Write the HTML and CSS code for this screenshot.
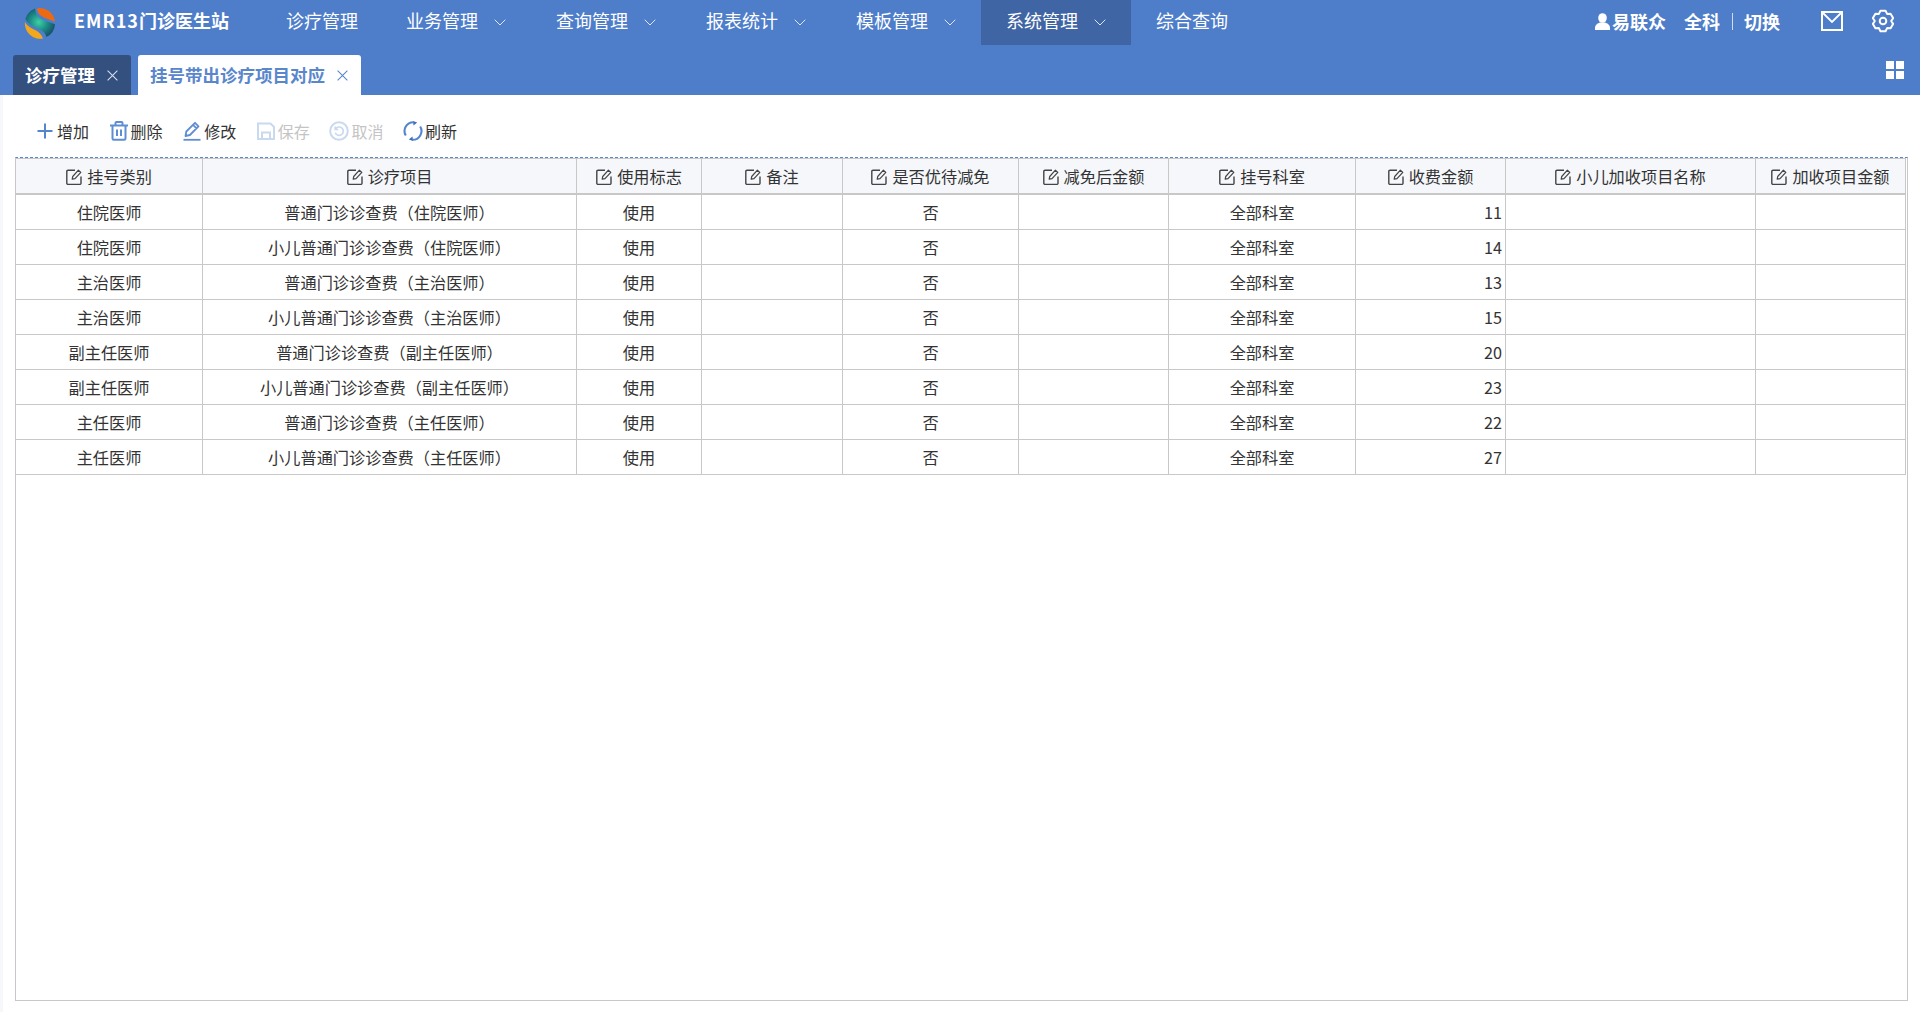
FILE: index.html
```html
<!DOCTYPE html>
<html lang="zh-CN">
<head>
<meta charset="utf-8">
<title>挂号带出诊疗项目对应</title>
<link rel="stylesheet" href="styles.css">
</head>
<body>
<svg class="sprites" width="0" height="0" aria-hidden="true">
  <symbol id="edit" viewBox="0 0 16 16">
    <path d="M9 1.200H2a1.200 1.200 0 0 0-1.200 1.200v11.800A1.200 1.200 0 0 0 2 15.400h11.800a1.200 1.200 0 0 0 1.200-1.200V7.500" fill="none" stroke="currentColor" stroke-width="1.400"/>
    <path d="M6.200 10.200l.5-2.700L12.400 1.200l2.400 2.200-5.800 6.300z" fill="none" stroke="currentColor" stroke-width="1.200" stroke-linejoin="round"/>
  </symbol>
  <symbol id="chev" viewBox="0 0 12 7">
    <path d="M.7.7L6 6l5.300-5.300" fill="none" stroke="currentColor" stroke-width="1"/>
  </symbol>
  <symbol id="close" viewBox="0 0 11 11">
    <path d="M.6.6l9.800 9.800M10.400.6L.6 10.400" fill="none" stroke="currentColor" stroke-width="1.100"/>
  </symbol>
</svg>

<header class="topbar">
  <div class="navrow">
    <svg class="logo" viewBox="0 0 32 32" aria-hidden="true">
      <defs>
        <radialGradient id="teal" cx="45%" cy="48%" r="55%">
          <stop offset="0" stop-color="#3ed0a4"/>
          <stop offset=".55" stop-color="#1c8b86"/>
          <stop offset="1" stop-color="#16566b"/>
        </radialGradient>
      </defs>
      <path d="M13 1.400A15 15 0 0 1 31 14.600C27 12.600 21 12 16 8 14.500 6.500 13.500 4.200 13 1.400Z" fill="#ee6a12"/>
      <path d="M.9 15C3 19 7 21 11 23c4 2 6.500 4.500 8 8.600A15.500 15.500 0 0 1 .9 15Z" fill="#f3a81c"/>
      <path d="M11 1.600A15.500 15.500 0 0 0 1.400 12C4 17 9 19 13 21c5 2 8 4 9.500 9A15.500 15.500 0 0 0 31 17.200C26 15 19 14.500 14 9.500 12.500 8 11.500 5 11 1.600Z" fill="url(#teal)"/>
    </svg>
    <div class="brand"><span class="brand-code">EMR13</span>门诊医生站</div>
    <nav class="menu">
      <a class="menu-item">诊疗管理</a>
      <a class="menu-item">业务管理<svg class="chev"><use href="#chev"/></svg></a>
      <a class="menu-item">查询管理<svg class="chev"><use href="#chev"/></svg></a>
      <a class="menu-item">报表统计<svg class="chev"><use href="#chev"/></svg></a>
      <a class="menu-item">模板管理<svg class="chev"><use href="#chev"/></svg></a>
      <a class="menu-item active">系统管理<svg class="chev"><use href="#chev"/></svg></a>
      <a class="menu-item">综合查询</a>
    </nav>
    <div class="user">
      <svg class="person" viewBox="0 0 15 17" aria-hidden="true">
        <ellipse cx="7.500" cy="5" rx="4.300" ry="4.800" fill="#fff"/>
        <path d="M0 17v-2.200C0 11.800 3 10.200 5 9.600h5c2 .6 5 2.200 5 5.200V17z" fill="#fff"/>
      </svg>
      <span class="user-name">易联众</span>
      <span class="user-dept">全科</span>
      <span class="user-sep"></span>
      <span class="user-switch">切换</span>
      <svg class="mail" viewBox="0 0 22 20" aria-hidden="true">
        <rect x="1" y="1" width="20" height="18" fill="none" stroke="#fff" stroke-width="2"/>
        <path d="M2 2l9 9 9-9" fill="none" stroke="#fff" stroke-width="1.800"/>
      </svg>
      <svg class="gear" viewBox="0 0 24 24" aria-hidden="true">
        <polygon points="14.54,1.81 9.46,1.81 7.9,4.9 4.45,4.71 1.91,9.11 3.8,12 1.91,14.89 4.45,19.29 7.9,19.1 9.46,22.19 14.54,22.19 16.1,19.1 19.55,19.29 22.09,14.89 20.2,12 22.09,9.11 19.55,4.71 16.1,4.9" fill="none" stroke="#fff" stroke-width="2" stroke-linejoin="round"/>
        <circle cx="12" cy="12" r="3.300" fill="none" stroke="#fff" stroke-width="2"/>
      </svg>
    </div>
  </div>
  <div class="tabrow">
    <div class="tab tab-dark"><span class="tab-label">诊疗管理</span><svg class="tab-close"><use href="#close"/></svg></div>
    <div class="tab tab-current"><span class="tab-label">挂号带出诊疗项目对应</span><svg class="tab-close"><use href="#close"/></svg></div>
    <div class="grid-icon"><i></i><i></i><i></i><i></i></div>
  </div>
</header>

<main class="content">
  <div class="toolbar">
    <div class="tool">
      <svg class="tool-ico" viewBox="0 0 20 20"><path d="M10 2.500v15M2.500 10h15" fill="none" stroke="#5585cf" stroke-width="2"/></svg>增加
    </div>
    <div class="tool">
      <svg class="tool-ico" viewBox="0 0 20 20"><path d="M3.500 5.500v12a1.300 1.300 0 0 0 1.300 1.300h10.400a1.300 1.300 0 0 0 1.300-1.300v-12M1 4.500h18M6.500 4V2a1 1 0 0 1 1-1h5a1 1 0 0 1 1 1v2M8 8.500v6.500M12 8.500v6.500" fill="none" stroke="#5f8dd3" stroke-width="2"/></svg>删除
    </div>
    <div class="tool">
      <svg class="tool-ico" viewBox="0 0 20 20"><path d="M3.500 15l.8-4.500L13 1.800l3.500 3.500-8.600 8.700zM11 3.800l3.500 3.500" fill="none" stroke="#5f8dd3" stroke-width="1.800" stroke-linejoin="round"/><path d="M1.500 18.800h17" stroke="#5f8dd3" stroke-width="1.800"/></svg>修改
    </div>
    <div class="tool disabled">
      <svg class="tool-ico" viewBox="0 0 20 20"><path d="M2 2.500h12.500L18 6v12H2zM6 18v-6.500h8V18" fill="none" stroke="#c9d9f0" stroke-width="2"/></svg>保存
    </div>
    <div class="tool disabled">
      <svg class="tool-ico" viewBox="0 0 20 20"><circle cx="10" cy="10" r="8.800" fill="none" stroke="#c9d9f0" stroke-width="2"/><path d="M6.500 8A4.200 4.200 0 1 1 6.200 11.800M6.200 5.500V8.500h3" fill="none" stroke="#c9d9f0" stroke-width="1.700"/></svg>取消
    </div>
    <div class="tool">
      <svg class="tool-ico" viewBox="0 0 20 20"><path d="M2.800 14.500A8.800 8.800 0 0 1 10.500 1.200M17.200 5.500A8.800 8.800 0 0 1 9.500 18.800" fill="none" stroke="#5585cf" stroke-width="2.100"/><path d="M10 0l4.200 1.600-3.700 2.900zM10 20l-4.200-1.600 3.700-2.900z" fill="#3f6fbf"/></svg>刷新
    </div>
  </div>

  <div class="grid-wrap">
    <table class="data">
      <colgroup>
        <col class="c187"><col class="c374"><col class="c125"><col class="c141"><col class="c176"><col class="c150"><col class="c187"><col class="c150"><col class="c250"><col class="c150">
      </colgroup>
      <thead>
        <tr>
          <th><svg class="edit"><use href="#edit"/></svg>挂号类别</th>
          <th><svg class="edit"><use href="#edit"/></svg>诊疗项目</th>
          <th><svg class="edit"><use href="#edit"/></svg>使用标志</th>
          <th><svg class="edit"><use href="#edit"/></svg>备注</th>
          <th><svg class="edit"><use href="#edit"/></svg>是否优待减免</th>
          <th><svg class="edit"><use href="#edit"/></svg>减免后金额</th>
          <th><svg class="edit"><use href="#edit"/></svg>挂号科室</th>
          <th><svg class="edit"><use href="#edit"/></svg>收费金额</th>
          <th><svg class="edit"><use href="#edit"/></svg>小儿加收项目名称</th>
          <th><svg class="edit"><use href="#edit"/></svg>加收项目金额</th>
        </tr>
      </thead>
      <tbody>
        <tr><td>住院医师</td><td>普通门诊诊查费（住院医师）</td><td>使用</td><td></td><td>否</td><td></td><td>全部科室</td><td class="num">11</td><td></td><td></td></tr>
        <tr><td>住院医师</td><td>小儿普通门诊诊查费（住院医师）</td><td>使用</td><td></td><td>否</td><td></td><td>全部科室</td><td class="num">14</td><td></td><td></td></tr>
        <tr><td>主治医师</td><td>普通门诊诊查费（主治医师）</td><td>使用</td><td></td><td>否</td><td></td><td>全部科室</td><td class="num">13</td><td></td><td></td></tr>
        <tr><td>主治医师</td><td>小儿普通门诊诊查费（主治医师）</td><td>使用</td><td></td><td>否</td><td></td><td>全部科室</td><td class="num">15</td><td></td><td></td></tr>
        <tr><td>副主任医师</td><td>普通门诊诊查费（副主任医师）</td><td>使用</td><td></td><td>否</td><td></td><td>全部科室</td><td class="num">20</td><td></td><td></td></tr>
        <tr><td>副主任医师</td><td>小儿普通门诊诊查费（副主任医师）</td><td>使用</td><td></td><td>否</td><td></td><td>全部科室</td><td class="num">23</td><td></td><td></td></tr>
        <tr><td>主任医师</td><td>普通门诊诊查费（主任医师）</td><td>使用</td><td></td><td>否</td><td></td><td>全部科室</td><td class="num">22</td><td></td><td></td></tr>
        <tr><td>主任医师</td><td>小儿普通门诊诊查费（主任医师）</td><td>使用</td><td></td><td>否</td><td></td><td>全部科室</td><td class="num">27</td><td></td><td></td></tr>
      </tbody>
    </table>
  </div>
</main>
</body>
</html>
```

FILE: styles.css
```css
* { box-sizing: border-box; }
html, body { height: 100%; }
body {
  margin: 0;
  display: flex;
  flex-direction: column;
  height: 100vh;
  overflow: hidden;
  background: #fff;
  color: #333;
  font-family: "Noto Sans CJK SC", "Noto Sans", sans-serif;
  font-size: 16px;
}
.sprites { position: absolute; }

.topbar { flex: none; height: 95px; background: #4e7dc9; color: #fff; }
.navrow { display: flex; height: 45px; align-items: center; }
.logo { width: 32px; height: 32px; margin-left: 24px; flex: none; }
.brand { margin-left: 18px; width: 187px; padding-bottom: 4px; font-size: 18px; font-weight: 700; white-space: nowrap; line-height: 41px; }
.brand-code { letter-spacing: 1px; }
.menu { display: flex; height: 45px; }
.menu-item { display: flex; align-items: center; padding: 0 25px 4px; font-size: 18px; line-height: 41px; white-space: nowrap; }
.menu-item:first-child { padding-right: 23px; }
.menu-item.active { background: #4065a4; }
.chev { width: 12px; height: 7px; margin: 4px 0 0 16px; color: #dfe7f5; }

.user { margin-left: auto; display: flex; align-items: center; height: 45px; padding: 0 25px 3px 0; font-size: 18px; font-weight: 700; }
.person { width: 15px; height: 17px; margin-right: 2px; }
.user-dept { margin-left: 18px; }
.user-sep { width: 1px; height: 17px; background: #cfdcf1; margin: 0 11px 0 12px; }
.mail { width: 22px; height: 20px; margin-left: 41px; }
.gear { width: 24px; height: 24px; margin-left: 28px; }

.tabrow { display: flex; height: 50px; padding: 10px 16px 0 13px; gap: 7px; align-items: stretch; }
.tab { display: flex; align-items: center; padding: 0 13px 0 12px; border-radius: 3px 3px 0 0; font-size: 17.5px; font-weight: 700; white-space: nowrap; }
.tab-label { margin-bottom: 2px; }
.tab-dark { background: #34507f; }
.tab-current { background: #fff; color: #5a86cc; }
.tab-close { width: 11px; height: 11px; margin-left: 12px; color: #d5deec; }
.tab-current .tab-close { color: #5a86cc; }
.grid-icon { margin-left: auto; align-self: flex-start; margin-top: 6px; width: 18px; height: 18px; display: grid; grid-template-columns: 8px 8px; grid-template-rows: 8px 8px; gap: 2px; }
.grid-icon i { background: #fff; }

.content { flex: 1; min-height: 0; display: flex; flex-direction: column; border-left: 3px solid #f5f7fb; }
.toolbar { flex: none; height: 62px; display: flex; align-items: center; gap: 20.6px; padding: 10px 0 0 33px; }
.tool { display: flex; align-items: center; font-size: 16px; color: #333; white-space: nowrap; }
.tool.disabled { color: #c4c4c4; }
.tool-ico { width: 20px; height: 20px; margin: 0 2px 0 -1px; flex: none; }

.grid-wrap { flex: 1; min-height: 0; margin: 0 12px 11px; border: 1px solid #c8c8c8; border-top: 1px dashed #5a86cc; }
.data { width: 1890px; table-layout: fixed; border-collapse: separate; border-spacing: 0; font-size: 16.2px; }
.c125 { width: 125px; } .c141 { width: 141px; } .c150 { width: 150px; }
.c176 { width: 176px; } .c187 { width: 187px; } .c250 { width: 250px; } .c374 { width: 374px; }
.data th, .data td { padding: 0 5px; text-align: center; white-space: nowrap; border-right: 1px solid #c8c8c8; line-height: 20px; }
.data th { height: 37px; font-weight: 400; background: #f5f7fb; border-top: 1px solid #c8c8c8; border-bottom: 2px solid #c8c8c8; }
.data td { height: 35px; border-bottom: 1px solid #c8c8c8; }
.data td.num { text-align: right; padding-right: 3px; }
.edit { width: 16px; height: 16px; margin-right: 5px; vertical-align: -2px; color: #444; }
```
